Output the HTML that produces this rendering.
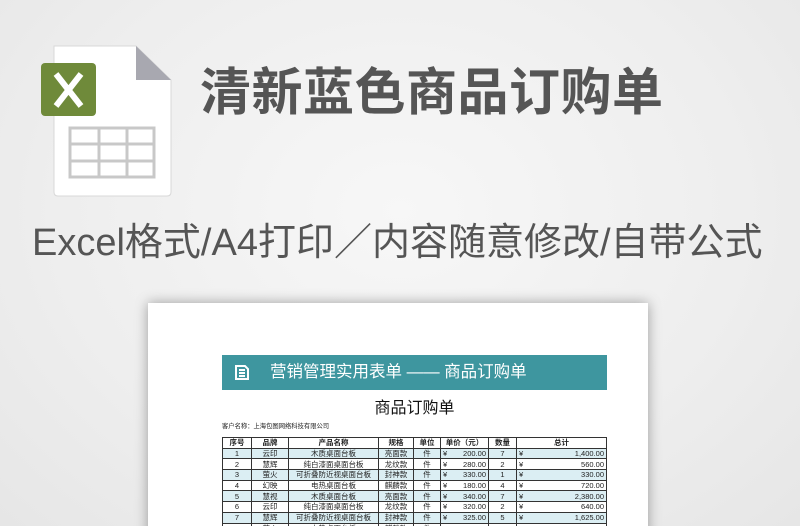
<!DOCTYPE html>
<html><head><meta charset="utf-8"><style>
*{margin:0;padding:0;box-sizing:border-box}
html,body{width:800px;height:526px;overflow:hidden}
body{position:relative;background:radial-gradient(ellipse at 50% 40%,#f7f7f7 0%,#eeeeee 60%,#e6e6e6 100%);font-family:"Liberation Sans","Noto Sans CJK SC",sans-serif}
.t1{position:absolute;left:200px;top:51px;font-size:51px;font-weight:bold;color:#555;letter-spacing:0.5px;white-space:nowrap}
.t2{position:absolute;left:32px;top:211px;font-size:38px;color:#555;white-space:nowrap}
.paper{position:absolute;left:148px;top:303px;width:500px;height:240px;background:#fff;box-shadow:0 0 12px rgba(0,0,0,.35)}
.bar{position:absolute;left:222px;top:355px;width:385px;height:35px;background:#3e969f;color:#fff;font-size:16.5px;line-height:35px;padding-left:48px;white-space:nowrap}
.h{position:absolute;left:222px;top:394px;width:385px;text-align:center;font-size:16px;color:#111}
.c{position:absolute;left:222px;top:421px;font-size:7px;color:#222;transform:scale(.9);transform-origin:left}
table{position:absolute;left:222px;top:437px;width:385px;border-collapse:collapse;font-size:7.5px;color:#222}
td{border:1px solid #333;height:10.7px;line-height:9px;text-align:center;padding:0 2px;white-space:nowrap}
tr:nth-child(even) td{background:#dbeef3}
tr:first-child td{font-weight:bold;background:#fff}
.l{text-align:left}.r{text-align:right}
</style></head><body>
<svg style="position:absolute;left:40px;top:44px" width="140" height="160" viewBox="0 0 140 160">
<path d="M14 2 H96 L131 36 V148 Q131 152 127 152 H18 Q14 152 14 148 Z" fill="#fff" stroke="#d8d8d8"/>
<path d="M96 2 L131 36 H96 Z" fill="#a8a8b0"/>
<rect x="30" y="84" width="84" height="49" fill="none" stroke="#c8c8c8" stroke-width="3"/>
<path d="M30 100 H114 M30 117 H114 M59 84 V133 M87 84 V133" stroke="#c8c8c8" stroke-width="3"/>
<rect x="1" y="19" width="55" height="53" rx="4" fill="#6f8a3a"/>
<path d="M16 30 L41 62 M41 30 L16 62" stroke="#fff" stroke-width="6"/>
</svg>
<div class="t1">清新蓝色商品订购单</div>
<div class="t2">Excel格式/A4打印／内容随意修改/自带公式</div>
<div class="paper"></div>
<div class="bar"><svg style="position:absolute;left:12px;top:9px" width="16" height="17"><path d="M2 2 H11 L14 5 V15 H2 Z M5 6 H11 M5 9 H11 M5 12 H11" fill="none" stroke="#fff" stroke-width="2"/></svg>营销管理实用表单 —— 商品订购单</div>
<div class="h">商品订购单</div>
<div class="c">客户名称：上海包图网络科技有限公司</div>
<table>
<colgroup><col style="width:29px"><col style="width:37px"><col style="width:90px"><col style="width:35px"><col style="width:27px"><col style="width:48px"><col style="width:28px"><col></colgroup>
<tr><td>序号</td><td>品牌</td><td>产品名称</td><td>规格</td><td>单位</td><td>单价（元）</td><td>数量</td><td>总计</td></tr>
<tr><td>1</td><td>云印</td><td>木质桌面台板</td><td>亮面款</td><td>件</td><td class="l">¥ <span style="float:right">200.00</span></td><td>7</td><td class="l">¥ <span style="float:right">1,400.00</span></td></tr>
<tr><td>2</td><td>慧辉</td><td>纯白漆面桌面台板</td><td>龙纹款</td><td>件</td><td class="l">¥ <span style="float:right">280.00</span></td><td>2</td><td class="l">¥ <span style="float:right">560.00</span></td></tr>
<tr><td>3</td><td>萤火</td><td>可折叠防近视桌面台板</td><td>封神款</td><td>件</td><td class="l">¥ <span style="float:right">330.00</span></td><td>1</td><td class="l">¥ <span style="float:right">330.00</span></td></tr>
<tr><td>4</td><td>幻映</td><td>电热桌面台板</td><td>麒麟款</td><td>件</td><td class="l">¥ <span style="float:right">180.00</span></td><td>4</td><td class="l">¥ <span style="float:right">720.00</span></td></tr>
<tr><td>5</td><td>慧视</td><td>木质桌面台板</td><td>亮面款</td><td>件</td><td class="l">¥ <span style="float:right">340.00</span></td><td>7</td><td class="l">¥ <span style="float:right">2,380.00</span></td></tr>
<tr><td>6</td><td>云印</td><td>纯白漆面桌面台板</td><td>龙纹款</td><td>件</td><td class="l">¥ <span style="float:right">320.00</span></td><td>2</td><td class="l">¥ <span style="float:right">640.00</span></td></tr>
<tr><td>7</td><td>慧辉</td><td>可折叠防近视桌面台板</td><td>封神款</td><td>件</td><td class="l">¥ <span style="float:right">325.00</span></td><td>5</td><td class="l">¥ <span style="float:right">1,625.00</span></td></tr>
<tr><td>8</td><td>萤火</td><td>电热桌面台板</td><td>麒麟款</td><td>件</td><td class="l">¥ <span style="float:right">180.00</span></td><td>4</td><td class="l">¥ <span style="float:right">720.00</span></td></tr>
</table>
</body></html>
